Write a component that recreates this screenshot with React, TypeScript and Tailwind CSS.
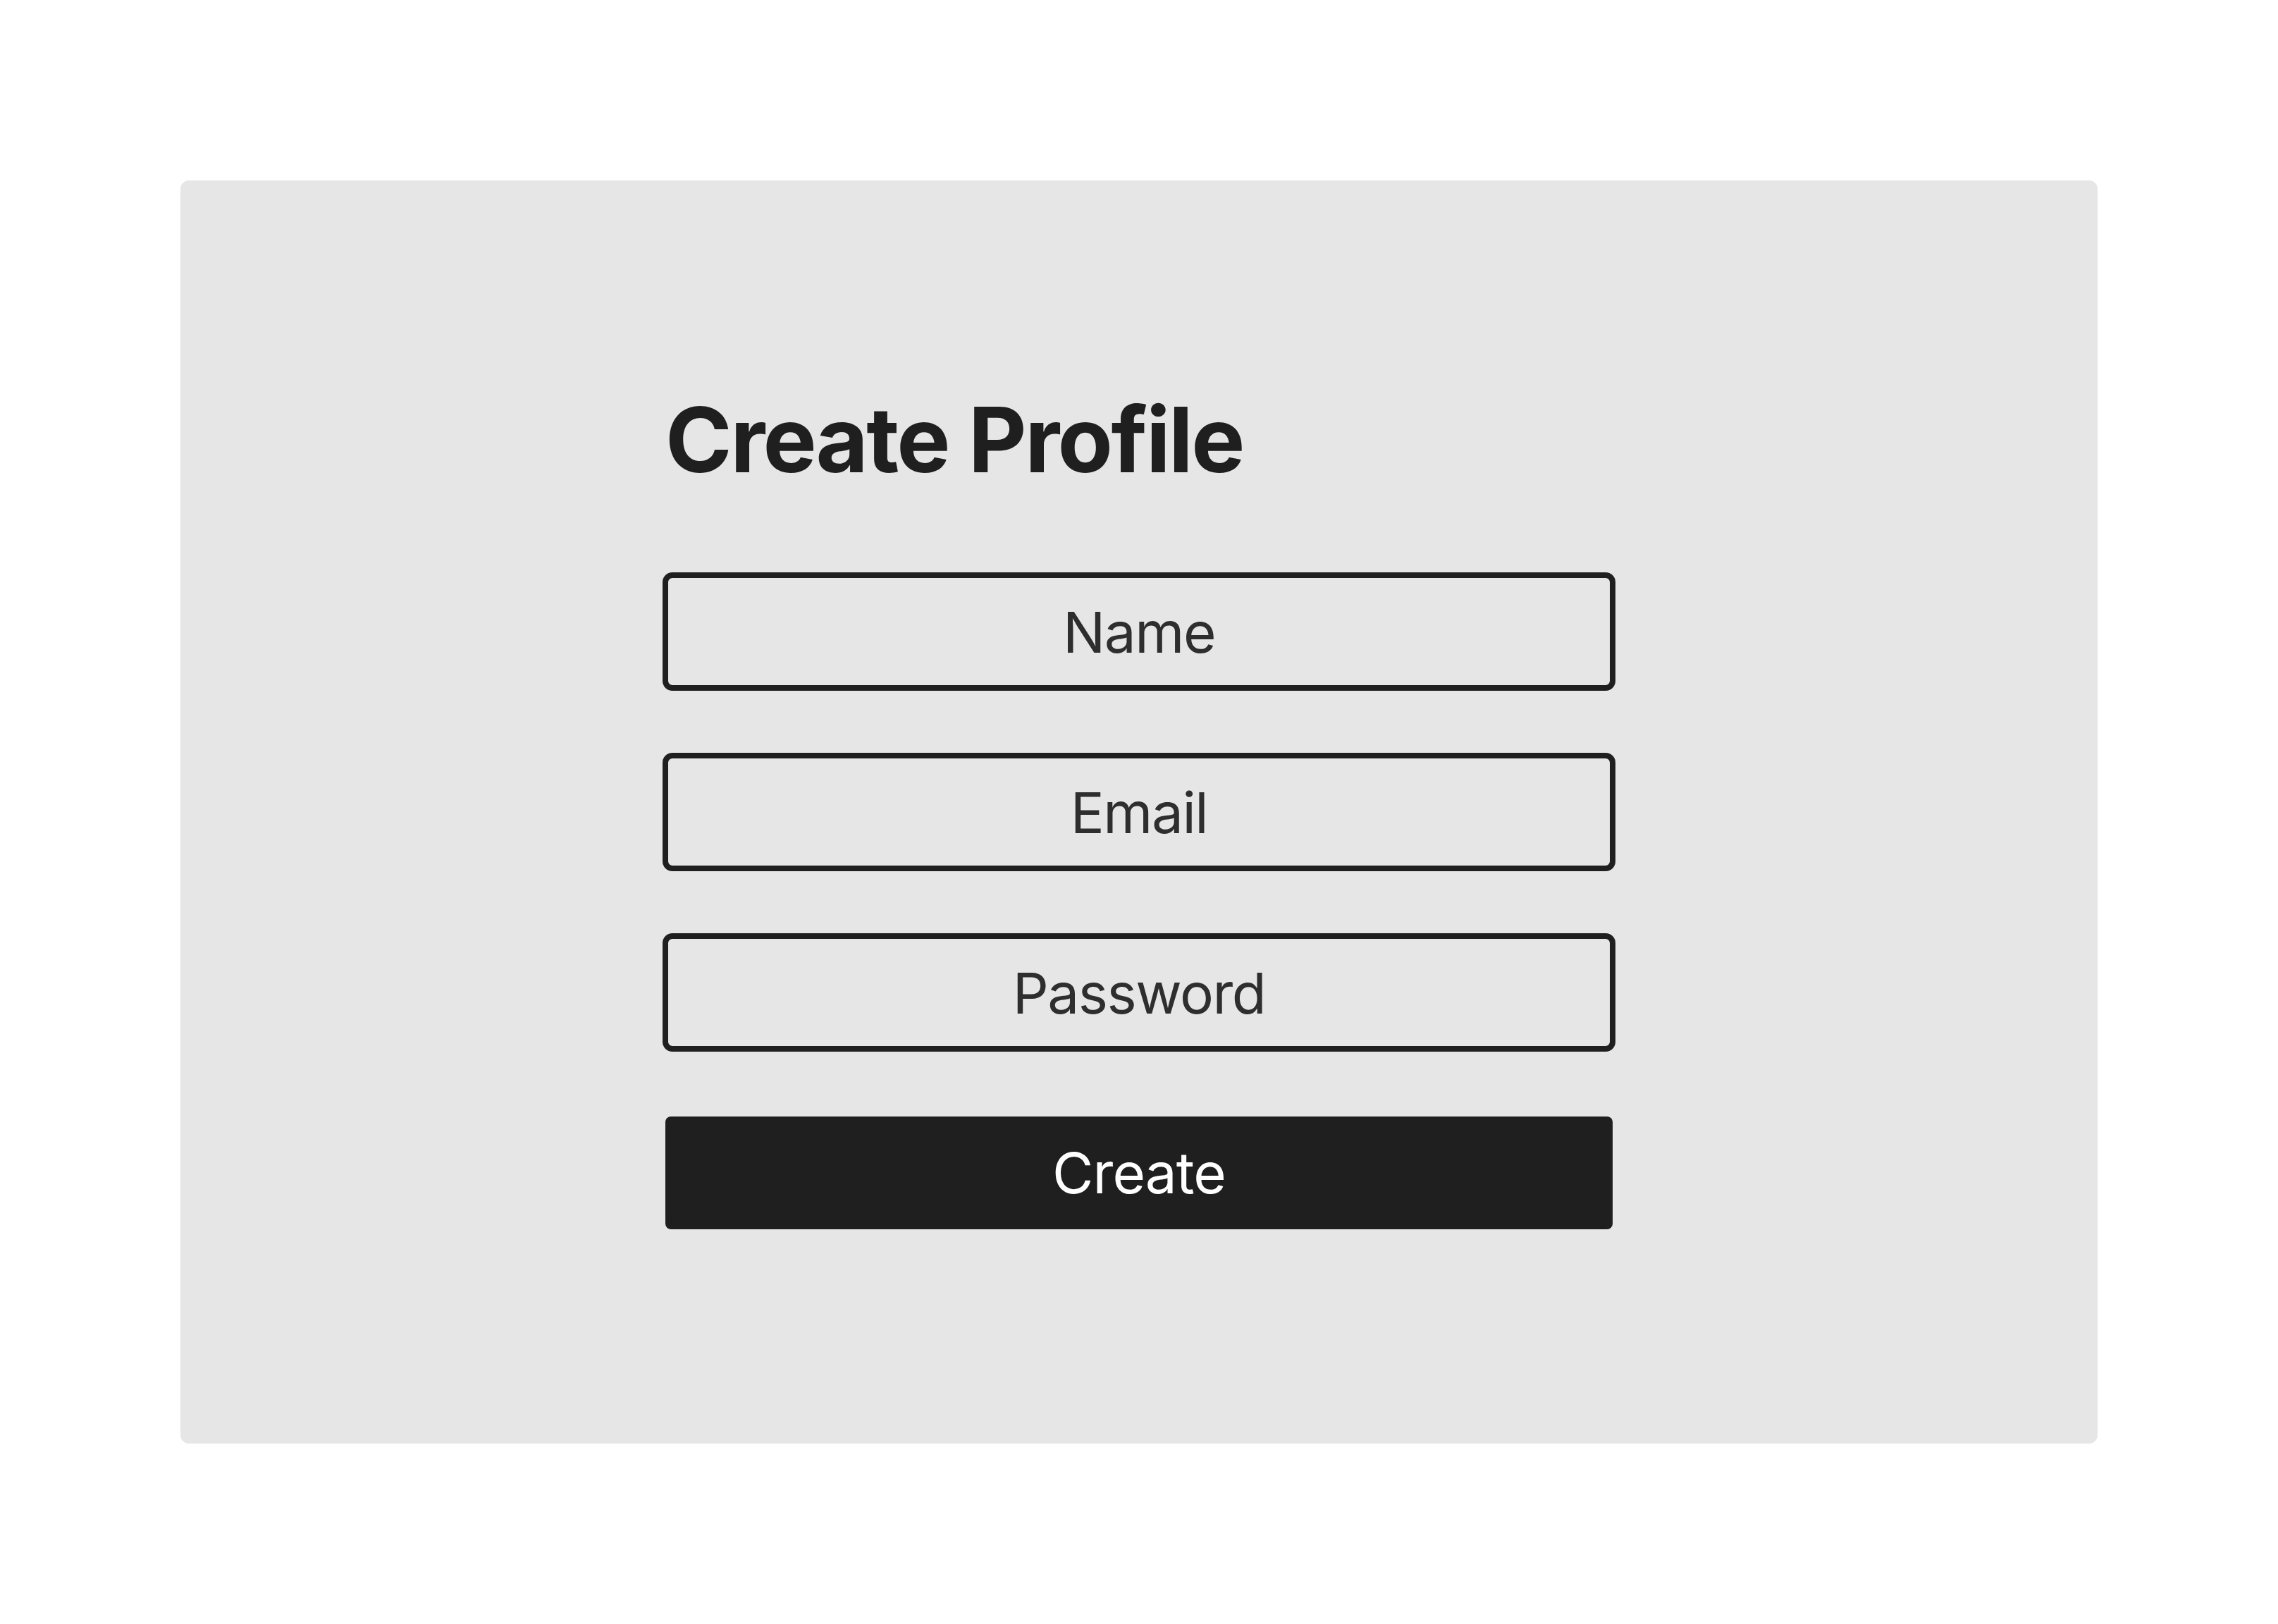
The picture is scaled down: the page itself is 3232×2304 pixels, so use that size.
import React from "react";

export default function App() {
  const fields = ["Name", "Email", "Password"];
  return (
    <div
      className="w-[3232px] h-[2304px] bg-white p-[256px] flex"
      style={{ fontFamily: "Inter, 'Noto Sans', sans-serif" }}
    >
      <div className="flex-1 rounded-xl bg-[#e6e6e6] flex items-center justify-center">
        <div className="w-[1344px] flex flex-col">
          <h1 className="text-[128px] leading-none font-bold tracking-[-0.02em] text-[#1f1f1f]">
            Create Profile
          </h1>
          <div className="mt-[128px] flex flex-col gap-[96px]">
            {fields.map((f) => (
              <div key={f} className="h-[160px] flex flex-col">
                <input
                  type={f === "Password" ? "password" : f === "Email" ? "email" : "text"}
                  placeholder={f}
                  className="-m-1 h-[168px] w-[1352px] shrink-0 rounded-[14px] border-[8px] border-[#1f1f1f] bg-transparent text-center text-[80px] tracking-[-0.018em] text-[#2e2e2e] placeholder:text-[#2e2e2e] outline-none"
                />
              </div>
            ))}
            <button className="h-[160px] w-full rounded-lg bg-[#1f1f1f] text-white text-[80px] tracking-[-0.012em] leading-none">
              Create
            </button>
          </div>
        </div>
      </div>
    </div>
  );
}
